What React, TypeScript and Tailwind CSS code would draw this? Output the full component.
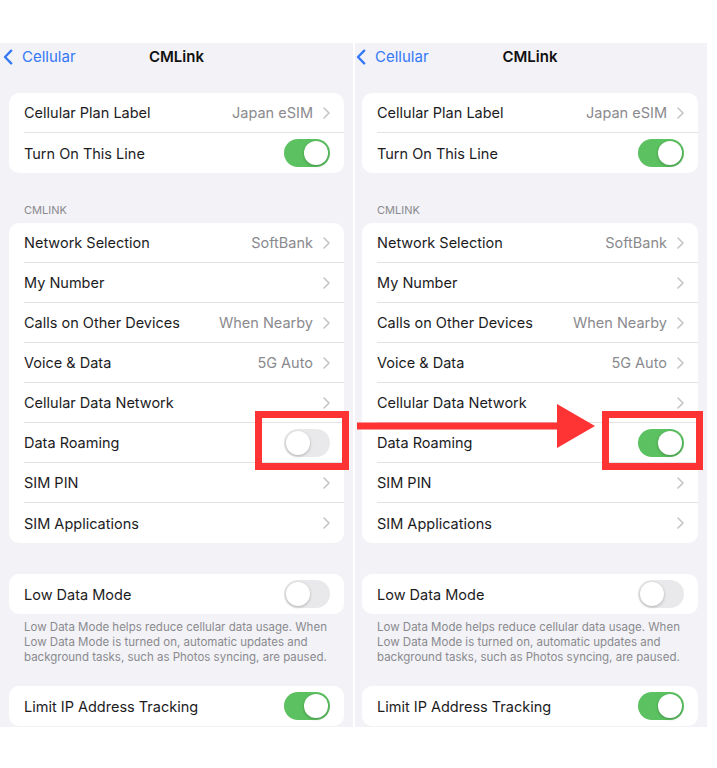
import React from "react";

type Row = {
  label: string;
  value?: string;
  chevron?: boolean;
  toggle?: "on" | "off";
};

const topRows: Row[] = [
  { label: "Cellular Plan Label", value: "Japan eSIM", chevron: true },
  { label: "Turn On This Line", toggle: "on" },
];

function carrierRows(roaming: "on" | "off"): Row[] {
  return [
    { label: "Network Selection", value: "SoftBank", chevron: true },
    { label: "My Number", chevron: true },
    { label: "Calls on Other Devices", value: "When Nearby", chevron: true },
    { label: "Voice & Data", value: "5G Auto", chevron: true },
    { label: "Cellular Data Network", chevron: true },
    { label: "Data Roaming", toggle: roaming },
    { label: "SIM PIN", chevron: true },
    { label: "SIM Applications", chevron: true },
  ];
}

function Chevron() {
  return (
    <svg width="7" height="12" viewBox="0 0 7 12" className="ml-[10px] shrink-0">
      <path d="M1 1l5 5-5 5" fill="none" stroke="#c5c5c8" strokeWidth="1.6" strokeLinecap="round" strokeLinejoin="round" />
    </svg>
  );
}

function Toggle({ on }: { on: boolean }) {
  return (
    <span
      className={
        on
          ? "flex h-[28px] w-[46px] items-center justify-end rounded-full bg-[#5cc160] p-[2px]"
          : "flex h-[28px] w-[46px] items-center justify-start rounded-full bg-[#e9e9eb] p-[2px]"
      }
    >
      <span className="h-[24px] w-[24px] rounded-full bg-white shadow-[0_1px_3px_rgba(0,0,0,0.25)]" />
    </span>
  );
}

function Card({ rows }: { rows: Row[] }) {
  return (
    <div className="rounded-[10px] bg-white">
      {rows.map((row, i) => (
        <div className="pl-[15px]" key={row.label}>
          <div
            className={
              i < rows.length - 1
                ? "flex h-[40px] items-center border-b border-[#e3e3e6] pr-[14px]"
                : "flex h-[40px] items-center pr-[14px]"
            }
          >
            <span className="flex-1 truncate pt-[1px] text-[14.5px] text-[#1c1c1e]">{row.label}</span>
            {row.value && <span className="pt-[1px] text-[14.5px] text-[#8a8a8e]">{row.value}</span>}
            {row.chevron && <Chevron />}
            {row.toggle && <Toggle on={row.toggle === "on"} />}
          </div>
        </div>
      ))}
    </div>
  );
}

function Panel({ roaming, width, pad }: { roaming: "on" | "off"; width: string; pad: string }) {
  return (
    <div className={`${width} ${pad} h-[684px] shrink-0 overflow-hidden bg-[#f2f2f7]`}>
      <div className="relative flex h-[28px] items-center justify-center">
        <div className="absolute -left-[6px] top-0 flex h-[28px] items-center gap-[9px] text-[#3478f6]">
          <svg width="10" height="16" viewBox="0 0 10 16">
            <path d="M8.2 1.6L2 8l6.2 6.4" fill="none" stroke="#3478f6" strokeWidth="2.3" strokeLinecap="round" strokeLinejoin="round" />
          </svg>
          <span className="pt-[1px] text-[15px]">Cellular</span>
        </div>
        <span className="pt-[1px] text-[15px] font-semibold text-[#111]">CMLink</span>
      </div>

      <div className="mt-[22px]">
        <Card rows={topRows} />
      </div>

      <p className="px-[15px] pb-[6px] pt-[30px] text-[11px] leading-[14px] text-[#8a8a8e]">CMLINK</p>
      <Card rows={carrierRows(roaming)} />

      <div className="mt-[31px]">
        <Card rows={[{ label: "Low Data Mode", toggle: "off" }]} />
      </div>
      <p className="px-[15px] pt-[6px] text-[11.5px] leading-[15px] text-[#8a8a8e]">
        Low Data Mode helps reduce cellular data usage. When Low Data Mode is turned on, automatic updates and
        background tasks, such as Photos syncing, are paused.
      </p>

      <div className="mt-[21px]">
        <Card rows={[{ label: "Limit IP Address Tracking", toggle: "on" }]} />
      </div>
    </div>
  );
}

export default function App() {
  return (
    <div
      className="relative h-[768px] w-[717px] overflow-hidden bg-white pt-[43px]"
      style={{ fontFamily: "Inter, 'Noto Sans', sans-serif" }}
    >
      <div className="flex gap-[2px]">
        <Panel roaming="off" width="w-[353px]" pad="px-[9px]" />
        <Panel roaming="on" width="w-[352px]" pad="pl-[7px] pr-[9px]" />
      </div>

      {/* annotations */}
      <div className="absolute left-[255px] top-[411px] h-[59px] w-[94px] border-[7px] border-[#fe3333]" />
      <div className="absolute left-[602px] top-[411px] h-[59px] w-[101px] border-[7px] border-[#fe3333]" />
      <svg className="absolute left-[355px] top-[402px]" width="242" height="48" viewBox="0 0 242 48">
        <rect x="2" y="20.5" width="204" height="7" fill="#fe3333" />
        <polygon points="202,2 240,24 202,46" fill="#fe3333" />
      </svg>
    </div>
  );
}
